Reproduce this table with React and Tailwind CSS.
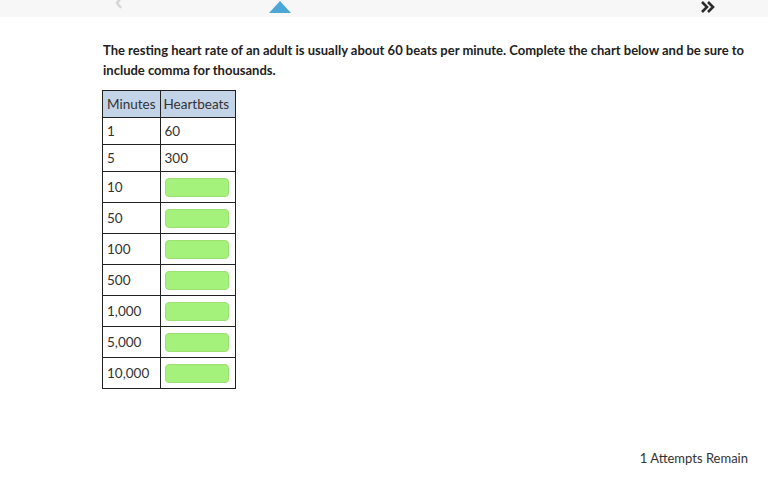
const ROWS = [
  { m: "1", h: "60" },
  { m: "5", h: "300" },
  { m: "10" },
  { m: "50" },
  { m: "100" },
  { m: "500" },
  { m: "1,000" },
  { m: "5,000" },
  { m: "10,000" },
];

export default function App() {
  return (
    <div className="w-[768px] h-[483px] bg-white flex flex-col text-[#333]" style={{ fontFamily: "Lato, 'Noto Sans', sans-serif" }}>
      <div className="h-[17px] bg-[#f7f7f7] relative shrink-0">
        <svg className="absolute left-[114px] -top-[2px]" width="10" height="11" viewBox="0 0 10 11">
          <path d="M7 0 L3 5 L7 10" stroke="#d6d6d6" strokeWidth="2.5" fill="none" />
        </svg>
        <svg className="absolute left-[269px] top-[1px]" width="22" height="12" viewBox="0 0 22 12">
          <path d="M11 0 L22 12 L0 12 Z" fill="#4ba8d6" />
        </svg>
        <svg className="absolute left-[700px] top-[1px]" width="16" height="12" viewBox="0 0 16 12">
          <path d="M2 1 L7 6 L2 11 M8 1 L13 6 L8 11" stroke="#2b2b2b" strokeWidth="2.6" fill="none" />
        </svg>
      </div>

      <div className="pl-[103px] pr-[20px] pt-[23px]">
        <p className="text-[13px] font-bold leading-[20px] text-[#222]">
          The resting heart rate of an adult is usually about 60 beats per minute. Complete the chart below and be sure to include comma for thousands.
        </p>

        <table className="mt-[10px] -ml-px border-collapse border border-[#666] text-[13.5px]">
          <thead>
            <tr className="bg-[#c3d3e8] h-[27px]">
              <th className="border border-[#222] font-normal text-left px-[4px] w-[56px] text-[#333]">Minutes</th>
              <th className="border border-[#222] font-normal text-left px-[3px] w-[75px] text-[#333]">Heartbeats</th>
            </tr>
          </thead>
          <tbody>
            {ROWS.map((r) => (
              <tr key={r.m} className={r.h ? "h-[27px]" : "h-[31px]"}>
                <td className="border border-[#222] px-[4px]">{r.m}</td>
                <td className="border border-[#222] px-[4px]">
                  {r.h ? r.h : <div className="h-[19px] w-[64px] rounded-[4px] bg-[#a4f27c] border border-[#9be070]" />}
                </td>
              </tr>
            ))}
          </tbody>
        </table>
      </div>

      <div className="flex-1" />
      <div className="flex justify-end pr-[20px] pb-[15px] text-[13px] text-[#333]">1 Attempts Remain</div>
    </div>
  );
}
